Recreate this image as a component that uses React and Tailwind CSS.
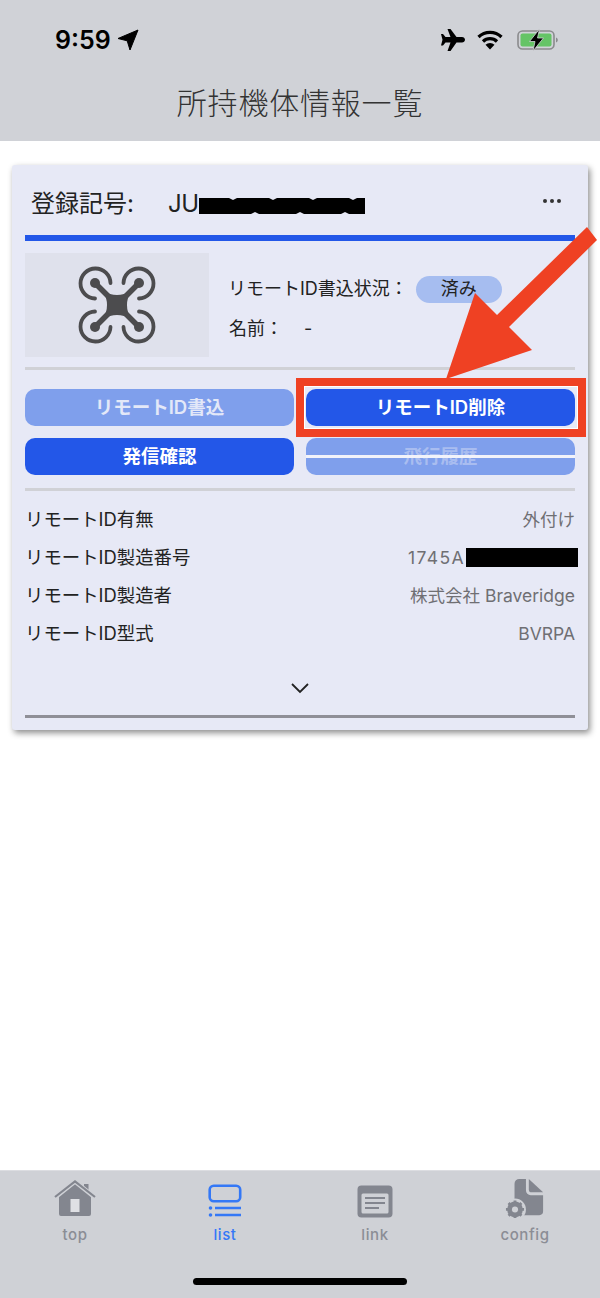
const rows = [
  { label: "リモートID有無", value: "外付け" },
  { label: "リモートID製造番号", value: "1745A", hidden: true },
  { label: "リモートID製造者", value: "株式会社 Braveridge" },
  { label: "リモートID型式", value: "BVRPA" },
];

function StatusIcons() {
  return (
    <div className="flex items-center">
      <svg width="26" height="24" viewBox="0 0 26 24" className="mr-[12px]">
        <path d="M8.500 1h3l6 8h5.500c1.600 0 3 1.200 3 2.800s-1.400 2.700-3 2.700h-5.500l-6 8.500h-3l3-8.500h-5l-2.500 3h-2l1.500-5.700-1.500-5.800h2l2.500 3h5z" fill="#000" />
      </svg>
      <svg width="26" height="20" viewBox="0 0 26 20" className="mr-[14px]">
        <path d="M1.500 7a16.500 16.500 0 0 1 23 0" fill="none" stroke="#000" strokeWidth="3.200" />
        <path d="M6 11.500a10 10 0 0 1 14 0" fill="none" stroke="#000" strokeWidth="3.200" />
        <path d="M13 19.500l-4.500-4.700a6.400 6.400 0 0 1 9 0z" fill="#000" />
      </svg>
      <svg width="42" height="22" viewBox="0 0 42 22">
        <rect x="1" y="2" width="36" height="18" rx="4.500" fill="none" stroke="#8a8b8d" strokeWidth="1.600" />
        <rect x="3.500" y="4.500" width="31" height="13" rx="2" fill="#65c466" />
        <path d="M39 8.500c1.300.4 1.800 1.400 1.800 2.500s-.5 2.100-1.800 2.500z" fill="#8a8b8d" />
        <path d="M22.500 0l-10 12.500h5.500l-2 9.500 10.500-13h-6z" fill="#000" stroke="#cfd1d6" strokeWidth="0.800" />
      </svg>
    </div>
  );
}

function Drone() {
  const rotor = (
    <g>
      <path d="M32.500 17A15 15 0 1 0 17 32.500" fill="none" stroke="#4c4c4e" strokeWidth="3.800" strokeLinecap="round" />
      <circle cx="17" cy="17" r="5" fill="#4c4c4e" />
      <path d="M17 17L39 39" stroke="#4c4c4e" strokeWidth="5.500" />
    </g>
  );
  return (
    <svg width="78" height="78" viewBox="0 0 78 78">
      {rotor}
      <g transform="rotate(90 39 39)">{rotor}</g>
      <g transform="rotate(180 39 39)">{rotor}</g>
      <g transform="rotate(270 39 39)">{rotor}</g>
      <path d="M25 25Q39 33 53 25Q45 39 53 53Q39 45 25 53Q33 39 25 25z" fill="#4c4c4e" />
    </svg>
  );
}

function HomeIcon() {
  return (
    <svg width="42" height="38" viewBox="0 0 42 38">
      <path d="M5 15.500L21 2.500l9 7.300V4h4.500v9.500L37 15.500V34a2 2 0 0 1-2 2H7a2 2 0 0 1-2-2z" fill="#83868f" />
      <path d="M1 17.500L21 1.500l20 16" fill="none" stroke="#cfd1d6" strokeWidth="4.500" />
      <path d="M1 17L21 1.500 41 17" fill="none" stroke="#83868f" strokeWidth="2.200" />
      <rect x="16.500" y="19" width="9" height="13" fill="#dfe0e4" />
    </svg>
  );
}

function ListIcon() {
  return (
    <svg width="34" height="34" viewBox="0 0 34 34">
      <rect x="1.700" y="1.700" width="30.500" height="15.500" rx="4" fill="none" stroke="#3478f6" strokeWidth="2.600" />
      <circle cx="2.500" cy="24" r="1.800" fill="#3478f6" />
      <circle cx="2.500" cy="31" r="1.800" fill="#3478f6" />
      <path d="M7 24h26M7 31h26" stroke="#3478f6" strokeWidth="2.400" />
    </svg>
  );
}

function LinkIcon() {
  return (
    <svg width="36" height="33" viewBox="0 0 36 33">
      <rect x="0.500" y="0.500" width="35" height="32" rx="4" fill="#83868f" />
      <rect x="4.500" y="8.500" width="27" height="20" rx="1.500" fill="#cfd1d6" />
      <path d="M8 13h20M8 18h20M8 23h14" stroke="#83868f" strokeWidth="2" />
    </svg>
  );
}

function ConfigIcon() {
  return (
    <svg width="42" height="40" viewBox="0 0 42 42">
      <path d="M10 6a5 5 0 0 1 5-5h7v12a5 5 0 0 0 5 5h13v17a4 4 0 0 1-4 4H14a4 4 0 0 1-4-4z" fill="#83868f" />
      <path d="M25 1l15 14H28a3 3 0 0 1-3-3z" fill="#83868f" />
      <circle cx="10.500" cy="33" r="11.500" fill="#cfd1d6" />
      <circle cx="10.500" cy="33" r="6" fill="none" stroke="#83868f" strokeWidth="4.500" />
      <path d="M10.500 23.500v19M1 33h19M3.800 26.300l13.400 13.400M17.200 26.300L3.800 39.700" stroke="#83868f" strokeWidth="3" />
      <circle cx="10.500" cy="33" r="3.200" fill="#cfd1d6" />
    </svg>
  );
}

// black marker scribble over the registration number
function Scribble() {
  return (
    <svg width="166" height="20" viewBox="0 0 166 20" className="mt-[3px]">
      <path d="M0 3H30L34 5L38 3H70L74 5L78 3H110L114 5L118 3H150L154 5L158 3H166V19H150L146 17L142 19H105L101 17L97 19H60L56 17L52 19H0Z" fill="#000" />
    </svg>
  );
}

export default function App() {
  return (
    <div className="relative flex flex-col h-[1298px] w-[600px] overflow-hidden bg-white font-['Inter','Noto_Sans_CJK_JP',sans-serif]">
      <header className="h-[141px] bg-[#d0d2d7] shrink-0">
        <div className="flex items-center justify-between pl-[55px] pr-[41px] pt-[12px] h-[68px]">
          <div className="flex items-center gap-[6px]">
            <span className="text-[25px] leading-[28px] font-semibold text-black">9:59</span>
            <svg width="22" height="22" viewBox="0 0 22 22">
              <path d="M21 1L13 21l-2.800-9.200L1 9.500z" fill="#000" stroke="#000" strokeWidth="1" strokeLinejoin="round" />
            </svg>
          </div>
          <StatusIcons />
        </div>
        <h1 className="mt-[13px] text-center text-[30px] leading-[44px] font-light text-[#333] tracking-[0.8px]">所持機体情報一覧</h1>
      </header>

      <main className="flex-1 px-3 pt-6">
        <section className="h-[565px] rounded-[3px] bg-[#e7e9f6] px-[13px] shadow-[2px_3px_6px_rgba(0,0,0,0.45)]">
          <div className="flex items-center h-[70px] pt-[7px]">
            <span className="pl-[6px] w-[143px] text-[24px] text-[#222]">登録記号:</span>
            <span className="text-[24px] text-[#222] tracking-[-0.5px]">JU</span>
            <Scribble />
            <span className="ml-auto mr-[14px] -mt-[5px] flex gap-[3px]">
              <i className="size-[4px] rounded-full bg-[#333]" />
              <i className="size-[4px] rounded-full bg-[#333]" />
              <i className="size-[4px] rounded-full bg-[#333]" />
            </span>
          </div>
          <div className="h-[6px] bg-[#2357e8]" />

          <div className="flex mt-3 h-[104px]">
            <div className="flex w-[184px] items-center justify-center bg-[#dfe1ec]">
              <Drone />
            </div>
            <div className="ml-5 pt-[22px] text-[18px] leading-[28px] text-[#222]">
              <div className="flex items-center -ml-[1px]">
                <span>リモートID書込状況：</span>
                <span className="ml-[8px] flex h-[27px] w-[86px] items-center justify-center rounded-full bg-[#a6bdf0]">済み</span>
              </div>
              <div className="mt-[12px] flex">
                <span className="w-[75px]">名前：</span>
                <span>-</span>
              </div>
            </div>
          </div>

          <div className="mt-[10px] h-[3px] bg-[#d0d1d6]" />

          <div className="mt-[19px] grid grid-cols-2 gap-x-3 gap-y-3 text-[18.500px] font-semibold text-white">
            <button className="h-[37px] rounded-[10px] bg-[#7f9fec] text-[#e3e8f8]">リモートID書込</button>
            <button className="h-[37px] rounded-[10px] bg-[#2357e8]">リモートID削除</button>
            <button className="h-[37px] rounded-[10px] bg-[#2357e8]">発信確認</button>
            <button className="relative h-[37px] rounded-[10px] bg-[#7f9fec] text-[#a9bdf0]">
              飛行履歴
              <span className="absolute inset-x-0 top-[17px] h-[3px] bg-[#f2f3fa]" />
            </button>
          </div>

          <div className="mt-[13px] h-[3px] bg-[#d0d1d6]" />

          <dl className="mt-[9px]">
            {rows.map((row) => (
              <div key={row.label} className="flex h-[38px] items-center justify-between">
                <dt className="pt-[2px] text-[18.400px] text-[#222]">{row.label}</dt>
                <dd className="flex items-center pt-[3px] text-[17.500px] text-[#6f6f73]">
                  <span className={row.hidden ? "tracking-[1.400px]" : ""}>{row.value}</span>
                  {row.hidden && <span className="ml-[1px] -mr-[3px] -mt-[2px] h-[19px] w-[112px] bg-black" />}
                </dd>
              </div>
            ))}
          </dl>

          <div className="mt-[30px] flex justify-center">
            <svg width="20" height="12" viewBox="0 0 20 12">
              <path d="M2 2l8 8 8-8" fill="none" stroke="#222" strokeWidth="1.800" />
            </svg>
          </div>
          <div className="mt-[21px] h-[3px] bg-[#8f8f97]" />
        </section>
      </main>

      <footer className="relative h-[128px] shrink-0 border-t border-[#dcdde1] bg-[#cfd1d6]">
        <nav className="grid grid-cols-4 text-[15px] font-medium tracking-[0.6px] text-[#8b8d95]">
          {[
            { label: "top", icon: <HomeIcon /> },
            { label: "list", icon: <ListIcon />, active: true },
            { label: "link", icon: <LinkIcon /> },
            { label: "config", icon: <ConfigIcon /> },
          ].map((tab) => (
            <div key={tab.label} className={`flex flex-col items-center ${tab.active ? "text-[#3478f6]" : ""}`}>
              <div className="flex h-[51px] items-end justify-center pb-[4px]">{tab.icon}</div>
              <span className="leading-[26px]">{tab.label}</span>
            </div>
          ))}
        </nav>
        <div className="absolute bottom-[13px] left-[193px] h-[7px] w-[214px] rounded-full bg-black" />
      </footer>

      {/* annotation drawn on top of the screenshot */}
      <div className="absolute left-[296px] top-[378px] h-[59px] w-[290px] border-[8px] border-[#ef4123] shadow-[inset_0_0_0_1px_#fff]" />
      <svg className="absolute left-0 top-0 pointer-events-none" width="600" height="1298" viewBox="0 0 600 1298">
        <path d="M446 379L475 293L497 315L587 227L597 240L509 327L532 350z" fill="#ef4123" />
      </svg>
    </div>
  );
}
